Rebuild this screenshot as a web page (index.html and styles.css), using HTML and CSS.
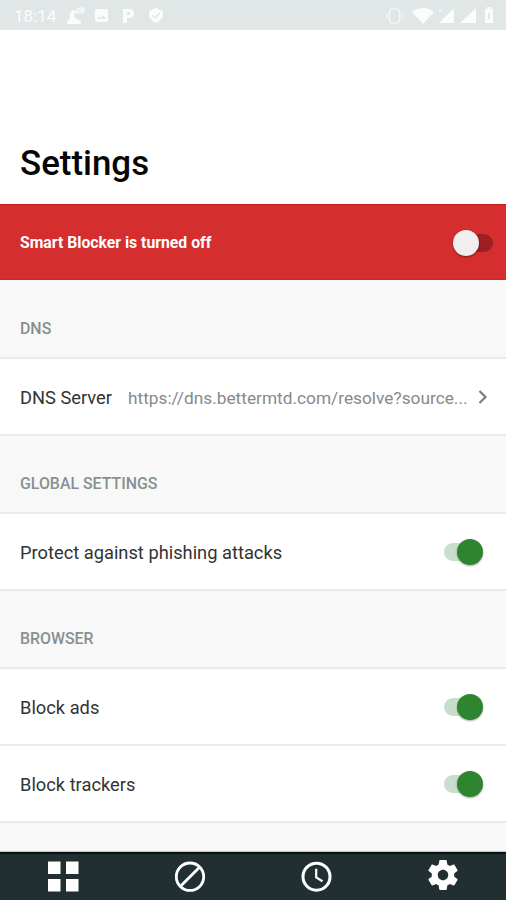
FILE: index.html
```html
<!DOCTYPE html>
<html lang="en">
<head>
<meta charset="utf-8">
<title>Settings</title>
<link rel="stylesheet" href="styles.css">
</head>
<body>
<div class="screen">
  <div class="status">
    <span class="time">18:14</span>
    <svg class="status-left" width="100" height="20" viewBox="0 0 100 20" fill="currentColor">
      <path d="M0 18c0-3 1-4 3-5-1-4 0-8 4-9l2 1-2 4c0 3 3 4 7 6v3z"/>
      <path d="M9 7V4q1-2 4-2h4v3q-1 2-3 2h-3z" fill-opacity=".5" stroke="currentColor"/>
      <path fill-rule="evenodd" d="M30 3h9q2 0 2 2v9q0 2-2 2h-9q-2 0-2-2V5q0-2 2-2zM30 13h9l-3-4-2.300 3-1.700-2z"/>
      <path fill-rule="evenodd" d="M56 3h6.500q4.500 0 4.500 4.500t-4.500 4.500H60v5h-4zM60 6v3h2q1.300 0 1.300-1.500T62 6z"/>
      <path d="M89 2l7 3v5q-1 4-7 7-6-3-7-7V5z"/>
      <path d="M85.500 9.500l2.500 2.500 5-5" fill="none" stroke="#e1e6e6" stroke-width="1.500"/>
    </svg>
    <svg class="status-right" width="112" height="20" viewBox="0 0 112 20" fill="currentColor">
      <g fill="none" stroke="currentColor" stroke-width="1.500" opacity=".7"><rect x="3.500" y="3" width="10" height="14" rx="3"/><path d="M1 7v6M16 7v6"/></g>
      <path d="M26 6q11-8 22 0L37 18z"/>
      <path d="M68 2v15H53zM90 2v15H74z"/>
      <path d="M53 3l3 3M56 3l-3 3" stroke="currentColor"/>
      <path fill-rule="evenodd" d="M99 3h2V1h4v2h2v14h-8zM102 7v6h2V7z"/>
    </svg>
  </div>
  <header class="header"><h1>Settings</h1></header>
  <div class="banner"><span>Smart Blocker is turned off</span><i class="switch off"></i></div>
  <h2 class="section tall">DNS</h2>
  <div class="row">
    <span class="label">DNS Server</span>
    <span class="value">https://dns.bettermtd.com/resolve?source...</span>
    <svg class="chevron" width="10" height="16" viewBox="0 0 10 16"><path d="M1.500 2l6 6-6 6" fill="none" stroke="#7d7d7d" stroke-width="2.200"/></svg>
  </div>
  <h2 class="section">GLOBAL SETTINGS</h2>
  <div class="row"><span class="label">Protect against phishing attacks</span><i class="switch on"></i></div>
  <h2 class="section">BROWSER</h2>
  <div class="row"><span class="label">Block ads</span><i class="switch on"></i></div>
  <div class="row"><span class="label">Block trackers</span><i class="switch on"></i></div>
  <div class="filler"></div>
  <nav class="nav">
    <a><svg width="32" height="32" viewBox="0 0 32 32" fill="#fff"><path d="M1 1.500h12.500v12.500H1zM19 1.500h12.500v12.500H19zM1 19h12.500v12.500H1zM19 19h12.500v12.500H19z"/></svg></a>
    <a><svg width="32" height="32" viewBox="0 0 32 32" fill="none" stroke="#fff" stroke-width="2.800"><circle cx="16" cy="16.700" r="13.700"/><path d="M6.500 26.200l19-19"/></svg></a>
    <a><svg width="32" height="32" viewBox="0 0 32 32" fill="none" stroke="#fff" stroke-width="3"><circle cx="16.500" cy="16.700" r="13.500"/><path d="M16.200 8.700v8.700l6.300 3.800" stroke-width="2.200"/></svg></a>
    <a><svg class="gear" width="36" height="36" viewBox="0 0 24 24" fill="#fff"><path d="M19.430 12.980c.04-.32.070-.64.070-.98s-.03-.66-.07-.98l2.110-1.650c.19-.15.240-.42.120-.64l-2-3.460c-.12-.22-.39-.3-.61-.22l-2.490 1c-.52-.4-1.080-.73-1.690-.98l-.38-2.650C14.460 2.180 14.250 2 14 2h-4c-.25 0-.46.180-.49.420l-.38 2.650c-.61.250-1.170.590-1.690.980l-2.490-1c-.23-.09-.49 0-.61.220l-2 3.460c-.13.220-.07.490.12.640l2.110 1.650c-.04.320-.07.650-.07.980s.03.660.07.980l-2.110 1.650c-.19.150-.24.420-.12.640l2 3.460c.12.220.39.300.61.220l2.490-1c.52.400 1.080.730 1.690.980l.38 2.650c.03.240.24.420.49.420h4c.25 0 .46-.18.490-.42l.38-2.650c.61-.25 1.170-.59 1.690-.98l2.490 1c.23.090.49 0 .61-.22l2-3.460c.12-.22.070-.49-.12-.64zM12 15.500c-1.930 0-3.500-1.570-3.500-3.500s1.570-3.500 3.500-3.500 3.500 1.570 3.500 3.500-1.570 3.500-3.500 3.500z"/></svg></a>
  </nav>
</div>
</body>
</html>
```
FILE: styles.css
```css
* { box-sizing: border-box; }
body { margin: 0; font-family: Roboto, "Liberation Sans", sans-serif; background: #fff; }
.screen { width: 506px; height: 900px; display: flex; flex-direction: column; overflow: hidden; }
.status { height: 30px; flex: none; background: #e1e6e6; color: #fbfdfd; display: flex; align-items: center; padding: 1px 8px 0 14px; }
.time { font-size: 17px; width: 53px; line-height: 20px; }
.status-right { margin-left: auto; }
.header { height: 174px; flex: none; padding: 114px 20px 0; }
h1 { margin: 0; font-size: 34.9px; line-height: 40px; font-weight: 500; color: #060606; }
.banner { height: 76px; flex: none; background: #d42e2e; border-top: 1px solid #c1201f; border-bottom: 1px solid #c92a2a; color: #fff; font-size: 15.75px; font-weight: 700; display: flex; align-items: center; justify-content: space-between; padding: 2px 13px 0 20px; }
.banner span { margin-top: -2px; }
.section { margin: 0; height: 78px; flex: none; background: #f8f8f8; border-bottom: 2px solid #ebebeb; color: #879192; font-size: 15.9px; line-height: 20px; font-weight: 500; padding: 38px 20px 0; }
.section.tall { height: 79px; padding-top: 39px; }
.row { height: 77px; flex: none; background: #fff; border-bottom: 2px solid #ebebeb; display: flex; align-items: center; padding: 2px 23px 0 20px; color: #303434; font-size: 18.3px; }
.row .switch { margin-left: auto; margin-top: -2px; }
.label { white-space: nowrap; }
.value { margin-left: 16px; color: #898989; font-size: 17.3px; white-space: nowrap; flex: 1; }
.chevron { flex: none; margin-right: -5px; margin-top: -2px; }
.switch { display: flex; align-items: center; width: 39px; height: 18px; border-radius: 9px; flex: none; }
.switch::after { content: ""; width: 26px; height: 26px; border-radius: 50%; flex: none; }
.switch.on { background: linear-gradient(90deg, #c7dfca 0 22px, transparent 22px); justify-content: flex-end; }
.switch.on::after { background: #2e842f; box-shadow: 0 1px 2px #0005; }
.switch.off { background: linear-gradient(90deg, transparent 0 18px, #9c2023 18px); margin-top: -1px; }
.switch.off::after { background: #f0eeee; box-shadow: 0 1px 2px #0006; margin-left: -1px; }
.filler { flex: 1; background: #f9f9f9; }
.nav { height: 48px; flex: none; background: #212f33; border-top: 2px solid #0b1214; display: grid; grid-template-columns: repeat(4, 1fr); box-shadow: 0 -1px 1px #0003; }
.nav a { display: flex; align-items: flex-start; justify-content: center; padding-top: 6px; }
.gear { margin-top: -3px; }
```
